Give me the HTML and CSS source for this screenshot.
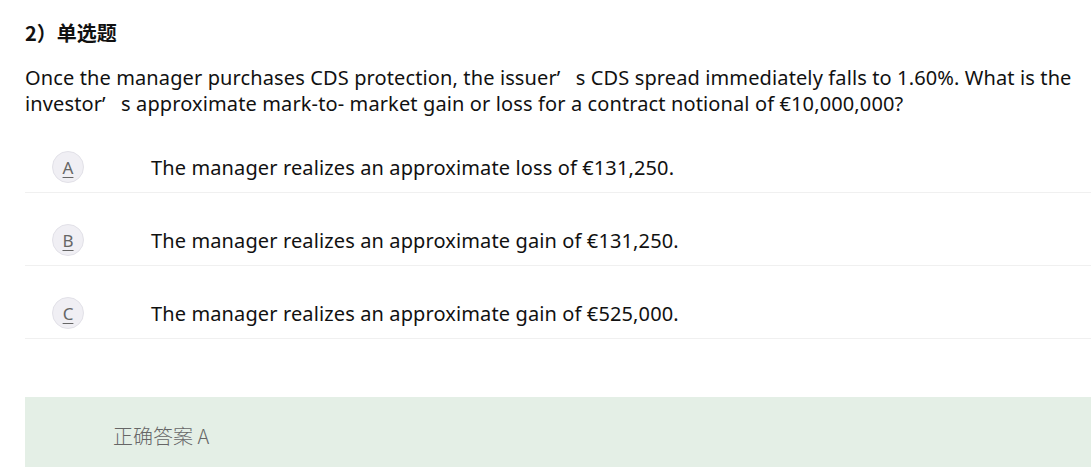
FILE: index.html
```html
<!DOCTYPE html>
<html lang="zh">
<head>
<meta charset="utf-8">
<link rel="stylesheet" href="styles.css">
</head>
<body>
<div class="page">
  <h2 class="qtitle">2）单选题</h2>
  <p class="stem">Once the manager purchases CDS protection, the issuer<span class="fw">’</span> s CDS spread immediately falls to 1.60%. What is the investor<span class="fw">’</span> s approximate mark-to- market gain or loss for a contract notional of €10,000,000?</p>
  <ul class="options">
    <li class="option"><span class="badge">A</span><span class="otext">The manager realizes an approximate loss of €131,250.</span></li>
    <li class="option"><span class="badge">B</span><span class="otext">The manager realizes an approximate gain of €131,250.</span></li>
    <li class="option"><span class="badge">C</span><span class="otext">The manager realizes an approximate gain of €525,000.</span></li>
  </ul>
  <div class="answer">正确答案 A</div>
</div>
</body>
</html>
```
FILE: styles.css
```css
html, body { margin: 0; padding: 0; background: #fff; }
body { font-family: "Noto Sans", "Noto Sans CJK SC", sans-serif; color: #111; overflow: hidden; }
.page { padding-left: 25px; width: 1080px; }
.qtitle { margin: 0; padding-top: 21px; font-size: 20px; font-weight: bold; line-height: 24px; font-family: "Noto Sans CJK SC", sans-serif; color: #111; }
.stem { margin: 20px 0 0; font-size: 20px; line-height: 26px; letter-spacing: 0.12px; }
.fw { font-family: "Noto Sans", sans-serif; padding-right: 10px; }
.options { list-style: none; margin: 3px 0 0; padding: 0; }
.option { display: flex; align-items: center; padding: 31px 0 9px; border-bottom: 1px solid #f0f0f0; }
.badge { width: 30px; height: 30px; margin-left: 27px; border-radius: 50%; background: #f0eff4; border: 1px solid #e2e1e8; display: flex; align-items: center; justify-content: center; font-size: 17px; color: #666; text-decoration: underline; text-underline-offset: 3px; }
.otext { margin-left: 67px; font-size: 20px; letter-spacing: 0.12px; }
.answer { margin-top: 58px; height: 76px; background: #e4efe6; display: flex; align-items: center; padding-left: 88px; font-size: 20px; color: #666; font-family: "Noto Sans CJK SC", sans-serif; font-weight: 300; }
```
